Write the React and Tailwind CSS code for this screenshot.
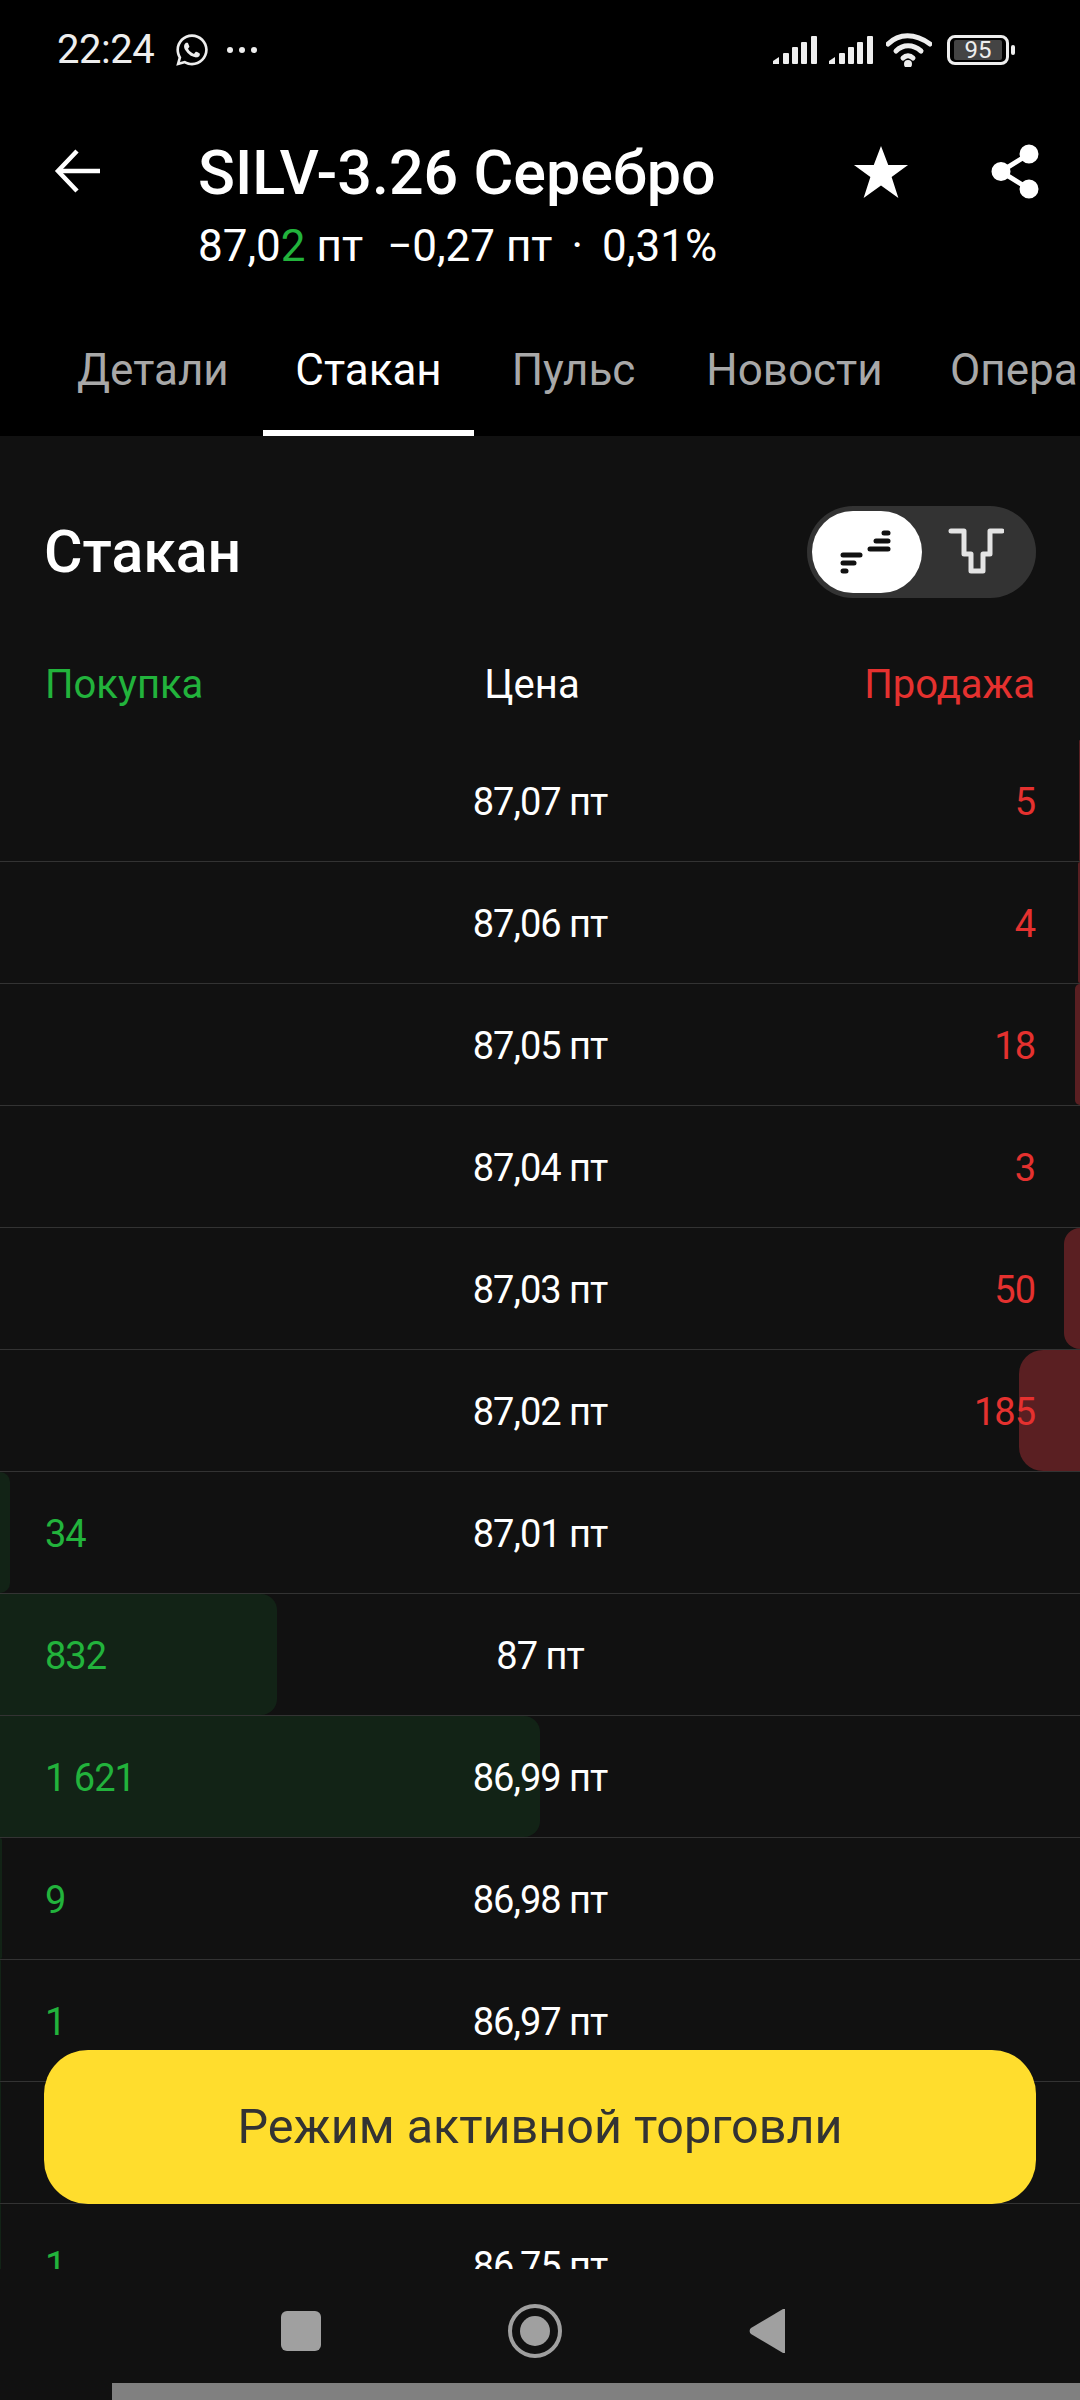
import { FaWhatsapp } from "react-icons/fa";

const rows = [
  { price: "87,07 пт", sell: "5", bar: 1 },
  { price: "87,06 пт", sell: "4", bar: 2 },
  { price: "87,05 пт", sell: "18", bar: 5 },
  { price: "87,04 пт", sell: "3", bar: 0 },
  { price: "87,03 пт", sell: "50", bar: 16 },
  { price: "87,02 пт", sell: "185", bar: 61 },
  { price: "87,01 пт", buy: "34", bar: 10 },
  { price: "87 пт", buy: "832", bar: 277 },
  { price: "86,99 пт", buy: "1 621", bar: 540 },
  { price: "86,98 пт", buy: "9", bar: 2 },
  { price: "86,97 пт", buy: "1", bar: 1 },
  { price: "", buy: "", bar: 1 }, // row under the yellow button
  { price: "86,75 пт", buy: "1", bar: 1 },
];

const tabs = [
  { label: "Детали", width: "w-[220px] pl-[34px]" },
  { label: "Стакан", width: "w-[211px] text-center text-white border-b-[6px] border-white" },
  { label: "Пульс", width: "w-[199px] text-center" },
  { label: "Новости", width: "w-[243px] text-center" },
  { label: "Операции", width: "pl-[34px]" },
];

const SignalIcon = () => (
  <svg width="44" height="28" viewBox="0 0 44 28" fill="#eeeeee">
    <path d="M0 28v-3l6-4v7z" />
    <rect x="10" y="17" width="6" height="11" rx="1" />
    <rect x="19" y="11" width="6" height="17" rx="1" />
    <rect x="28" y="6" width="6" height="22" rx="1" />
    <rect x="38" y="0" width="6" height="28" rx="1" />
  </svg>
);

const StatusBar = () => (
  <div className="flex items-center h-[48px] mt-[26px] pl-[57px] pr-[71px]">
    <span className="text-[40px] leading-none tracking-[-0.5px] text-[#eeeeee]">22:24</span>
    <FaWhatsapp className="ml-[20px] text-[36px] text-[#eeeeee]" />
    <div className="flex gap-[6px] ml-[17px]">
      <span className="w-[6px] h-[6px] rounded-full bg-[#eeeeee]" />
      <span className="w-[6px] h-[6px] rounded-full bg-[#eeeeee]" />
      <span className="w-[6px] h-[6px] rounded-full bg-[#eeeeee]" />
    </div>
    <div className="flex items-center ml-auto">
      <SignalIcon />
      <div className="ml-[12px]">
        <SignalIcon />
      </div>
      <svg className="ml-[13px]" width="46" height="34" viewBox="0 0 46 34" fill="none" stroke="#eeeeee" strokeWidth="5" strokeLinecap="round">
        <path d="M2 11C13 0 29 0 44 11" />
        <path d="M10 18C17 11 27 11 35 18" />
        <path d="M17 25C20 22 24 22 27 25" />
        <circle cx="22" cy="31" r="1.5" fill="#eeeeee" />
      </svg>
      <div className="relative flex items-center justify-center ml-[15px] w-[62px] h-[30px] rounded-[8px] border-[3px] border-[#eeeeee]">
        <div className="flex items-center justify-center w-[48px] h-[20px] rounded-[2px] bg-[#444444] text-[24px] leading-none text-[#eeeeee]">
          95
        </div>
        <span className="absolute -right-[9px] w-[4px] h-[10px] rounded-full bg-[#eeeeee]" />
      </div>
    </div>
  </div>
);

const Header = () => (
  <div className="relative h-[154px] mt-[67px] pl-[198px]">
    <svg className="absolute left-[54px] top-[6px]" width="48" height="48" viewBox="0 0 48 48" fill="none" stroke="white" strokeWidth="4.5">
      <path d="M46 24H5" />
      <path d="M23 4L4 24l19 20" />
    </svg>
    <div className="text-[61px] leading-[64px] font-medium text-white">SILV-3.26 Серебро</div>
    <div className="flex mt-[16px] text-[44px] leading-[50px] text-white">
      <span>
        87,0<span className="text-[#22b33c]">2</span> пт
      </span>
      <span className="ml-[24px]">−0,27 пт</span>
      <span className="ml-[19px]">·</span>
      <span className="ml-[19px]">0,31%</span>
    </div>
    <svg className="absolute left-[853px] top-[5px]" width="56" height="52" viewBox="0 0 58 56" fill="white" preserveAspectRatio="none">
      <path d="M29 0l7.500 20.500H57L40 33.500l7 22.500L29 42.500 11 56l7-22.500L1 20.500h20.500z" />
    </svg>
    <svg className="absolute left-[986px] top-[2px]" width="56" height="58" viewBox="0 0 56 58" fill="white" stroke="white" strokeWidth="5">
      <circle cx="43" cy="11" r="7" />
      <circle cx="15" cy="28.500" r="7" />
      <circle cx="43" cy="46" r="7" />
      <path d="M43 11L15 28.500L43 46" fill="none" />
    </svg>
  </div>
);

const Tabs = () => (
  <div className="flex mt-[36px] pl-[43px] h-[105px] overflow-hidden text-[#a8a8a8]">
    {tabs.map((tab) => (
      <div key={tab.label} className={"shrink-0 pt-[14px] text-[44px] leading-[50px] " + tab.width}>
        {tab.label}
      </div>
    ))}
  </div>
);

const Toggle = () => (
  <div className="flex items-center w-[229px] h-[92px] p-[5px] rounded-full bg-[#333333]">
    <div className="flex items-center justify-center w-[110px] h-[82px] rounded-full bg-white">
      <svg width="56" height="50" viewBox="0 0 56 50" fill="none" stroke="#111111" strokeWidth="5" strokeLinecap="round">
        <path d="M4 28H21" />
        <path d="M4 36H15" />
        <path d="M4 44H7" />
        <path d="M45 6H49" />
        <path d="M37 14H49" />
        <path d="M31 22H49" />
      </svg>
    </div>
    <svg className="ml-[26px]" width="56" height="50" viewBox="0 0 56 50" fill="none" stroke="#e4e4e4" strokeWidth="5" strokeLinecap="round" strokeLinejoin="round">
      <path d="M3 4H16V27H23V44H35V27H42V4H54" />
    </svg>
  </div>
);

const Row = ({ row, index }) => (
  <div className="relative flex items-center h-[122px] shrink-0 border-b border-[#333333] pt-[4px] px-[45px] text-[38px] tracking-[-1px]">
    {index > 5 && (
      <div
        className="absolute left-0 top-0 bottom-0 rounded-r-[16px] bg-[#122316]"
        style={{ width: row.bar }}
      />
    )}
    {index <= 5 && row.bar > 0 && (
      <div
        className="absolute right-0 top-0 bottom-0 rounded-l-[24px] bg-[#5a1f22]"
        style={{ width: row.bar }}
      />
    )}
    <span className="relative flex-1 text-[#22b33c]">{row.buy}</span>
    <span className="relative text-white">{row.price}</span>
    <span className="relative flex-1 text-right text-[#e5312f]">{row.sell}</span>
  </div>
);

const App = () => {
  return (
    <div className="relative flex flex-col h-[2400px] w-[1080px] overflow-hidden bg-black font-['Roboto',sans-serif]">
      <StatusBar />
      <Header />
      <Tabs />

      <div className="flex-1 min-h-0 bg-[#111111] overflow-hidden">
        <div className="flex items-center justify-between h-[92px] mt-[70px] px-[44px]">
          <h1 className="text-[59px] font-medium text-white">Стакан</h1>
          <Toggle />
        </div>
        <div className="relative flex items-center h-[50px] mt-[62px] px-[45px] text-[40px]">
          <span className="flex-1 text-[#22b33c]">Покупка</span>
          <span className="text-white -translate-x-[8px]">Цена</span>
          <span className="flex-1 text-right text-[#e5312f]">Продажа</span>
        </div>
        <div className="flex flex-col mt-[30px]">
          {rows.map((row, index) => (
            <Row key={index} row={row} index={index} />
          ))}
        </div>
      </div>

      <button className="absolute left-[44px] top-[2050px] w-[992px] h-[154px] rounded-[44px] bg-[#ffdd2d] text-[48.500px] text-[#333333]">
        Режим активной торговли
      </button>

      <div className="absolute left-0 right-0 bottom-0 h-[131px] bg-[#111111]">
        <div className="flex items-center justify-center gap-[186px] h-[114px] pt-[10px] pr-[12px]">
          <div className="w-[40px] h-[40px] rounded-[6px] bg-[#a0a0a0]" />
          <svg width="56" height="56" viewBox="0 0 56 56" fill="none">
            <circle cx="28" cy="28" r="25" stroke="#a0a0a0" strokeWidth="4" />
            <circle cx="28" cy="28" r="15" fill="#a0a0a0" />
          </svg>
          <svg width="38" height="46" viewBox="0 0 38 46" fill="#a0a0a0">
            <path d="M36 1v44h-2L2 26a4 4 0 0 1 0-6L34 1z" />
          </svg>
        </div>
        <div className="h-[17px] ml-[112px] bg-[#808080]" />
      </div>
    </div>
  );
};

export default App;
